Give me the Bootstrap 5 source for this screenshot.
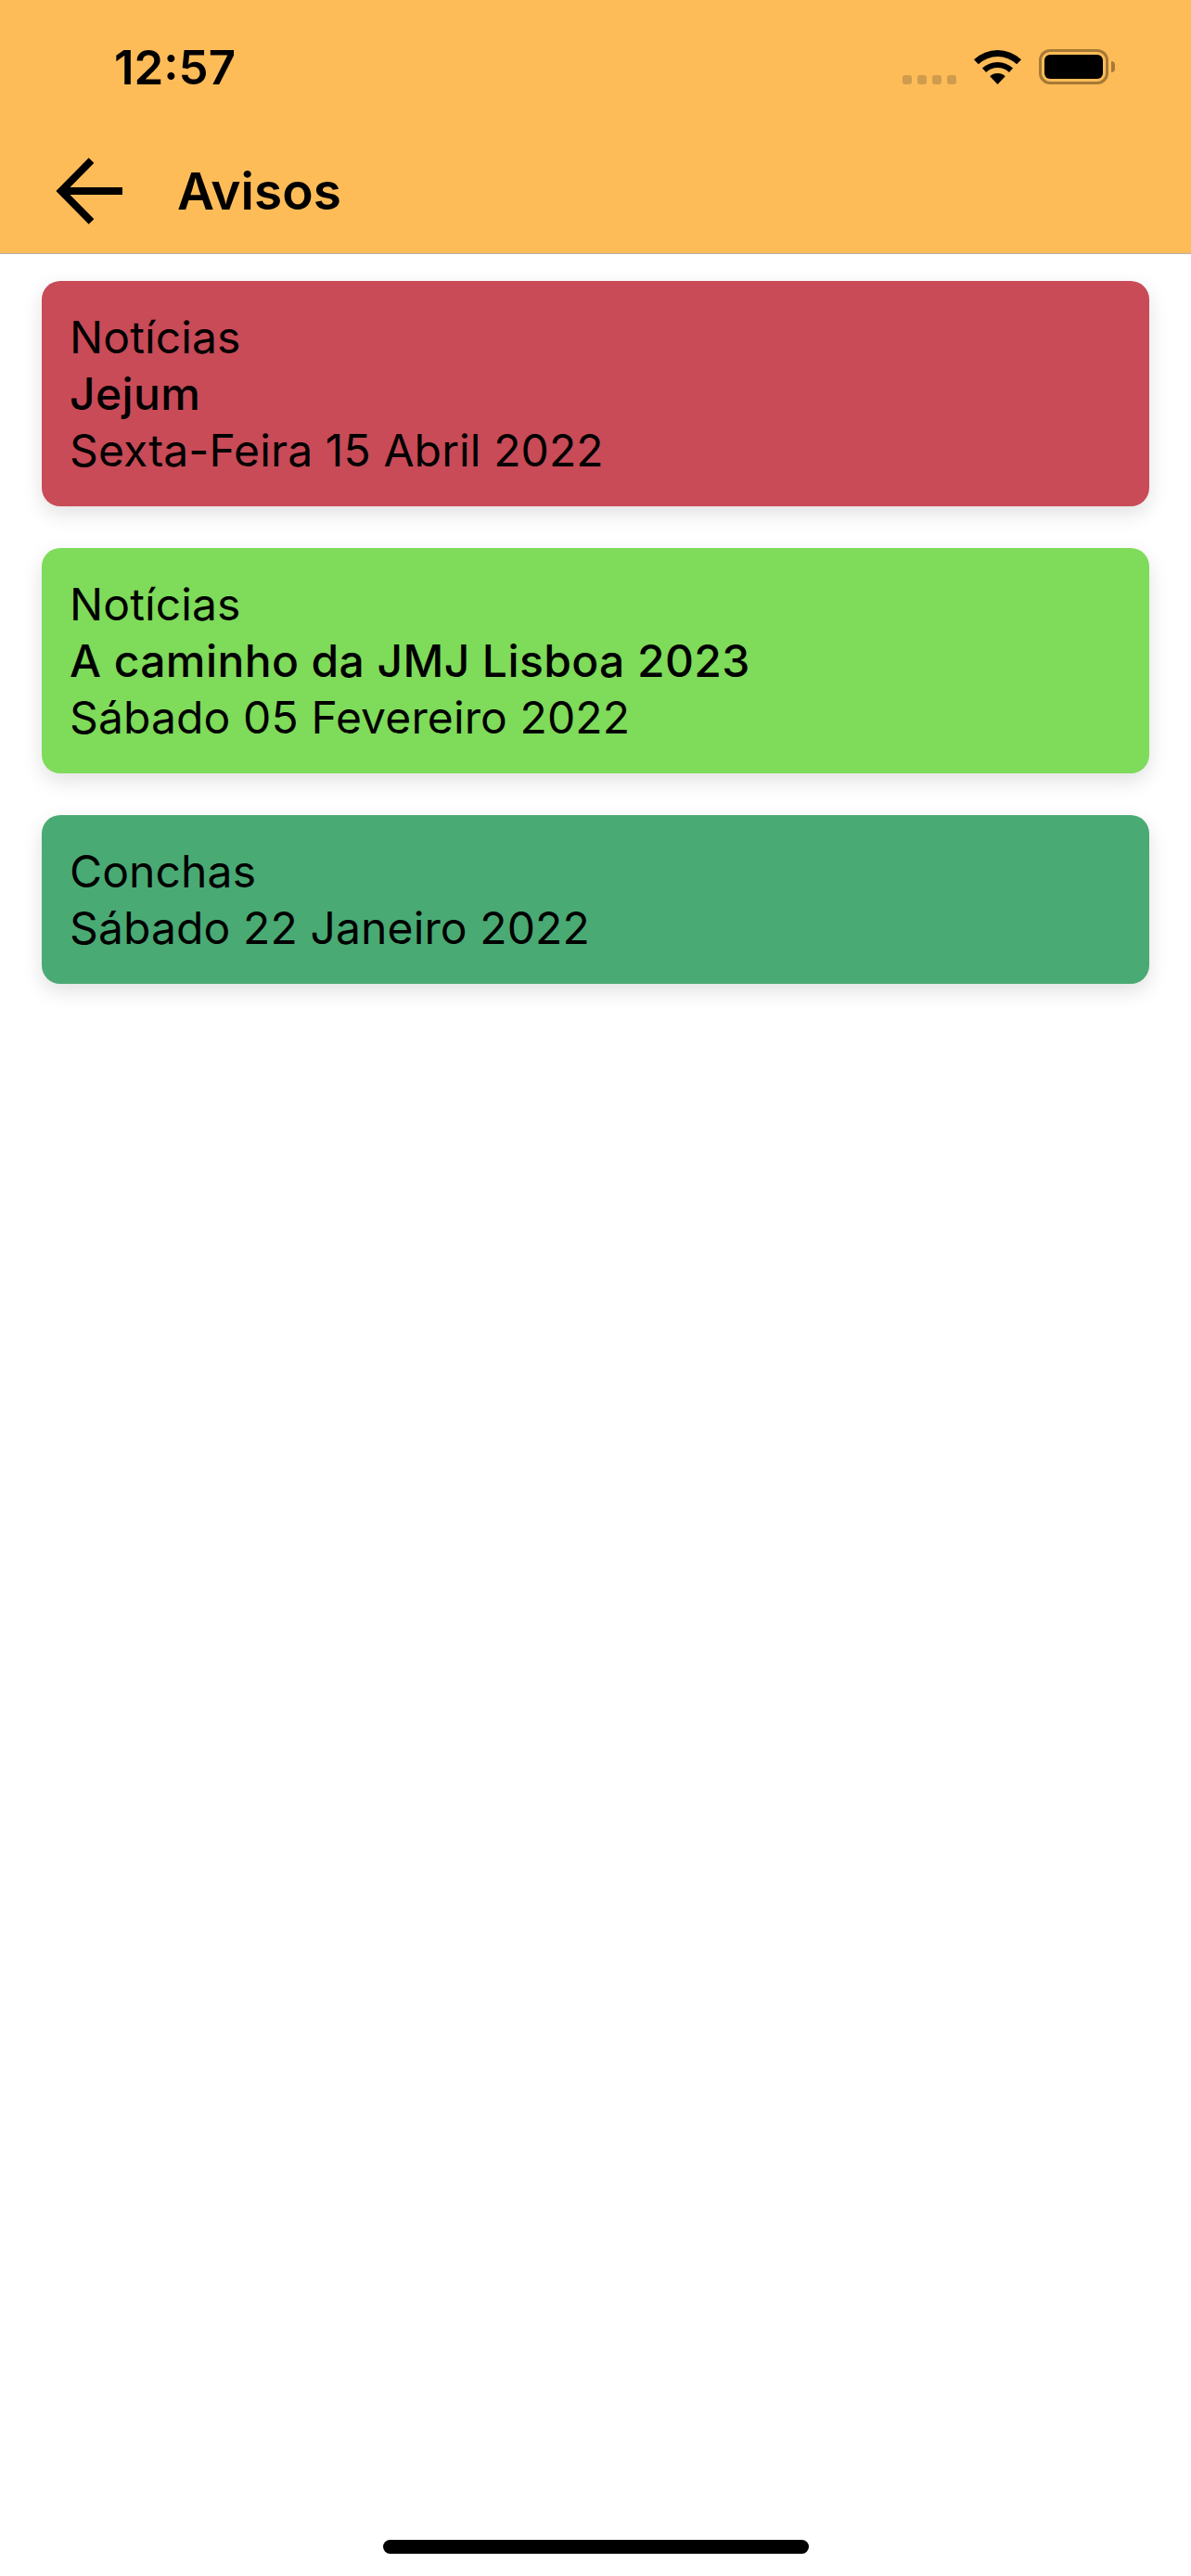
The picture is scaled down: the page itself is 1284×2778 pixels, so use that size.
<!DOCTYPE html>
<html lang="pt">
<head>
<meta charset="utf-8">
<title>Avisos</title>
<link href="https://cdn.jsdelivr.net/npm/bootstrap@5.3.0/dist/css/bootstrap.min.css" rel="stylesheet">
<style>
html, body { height: 100%; }
body { font-family: Inter, "Liberation Sans", sans-serif; color: #000; background: #fff; }
.app-shell { height: 2778px; }
.app-header { background: #febc59; height: 274px; border-bottom: 1px solid #b4b0a8; }
.status-row { height: 134px; }
.status-time { font-size: 51px; font-weight: 600; line-height: 1; margin-left: 123px; margin-top: 47px; }
.status-icons { margin-top: 53px; margin-right: 82px; }
.signal-dots { gap: 6px; margin-top: 28px; margin-right: 19px; }
.signal-dots span { width: 10px; height: 10px; border-radius: 3px; background: #cf9c4e; }
.wifi-icon { width: 51px; height: 37px; margin-top: 1px; margin-right: 19px; }
.batt-body { width: 75px; height: 38px; border: 3px solid #a67935; border-radius: 12px; padding: 3px; }
.batt-fill { background: #000; border-radius: 6px; }
.batt-nub { width: 4px; height: 12px; margin-left: 3px; margin-top: 13px; background: #a67935; border-radius: 0 6px 6px 0; }
.nav-row { height: 139px; }
.back-arrow { width: 72px; height: 72px; margin-left: 60px; margin-top: 36px; }
.nav-title { font-size: 55px; font-weight: 600; line-height: 1; margin-left: 59px; margin-top: 45px; }
.notice-list { padding: 29px 45px 0; gap: 45px; }
.notice-item { padding: 30px 30px; border-radius: 20px; border: 0; font-size: 48px; line-height: 61px; color: #000; letter-spacing: .12px; box-shadow: 0 8px 22px rgba(0,0,0,.12); }
.notice-title { font-weight: 500; letter-spacing: .4px; }
.tone-red { background: #c84b57; }
.tone-lime { background: #7fdb5a; }
.tone-teal { background: #4aaa74; }
.home-bar { width: 459px; height: 15px; border-radius: 8px; background: #000; margin-bottom: 24px; }
</style>
</head>
<body>
<div class="app-shell d-flex flex-column">
  <header class="app-header flex-shrink-0">
    <div class="status-row d-flex justify-content-between align-items-start">
      <div class="status-time">12:57</div>
      <div class="status-icons d-flex align-items-start">
        <div class="signal-dots d-flex"><span></span><span></span><span></span><span></span></div>
        <svg class="wifi-icon" viewBox="0 0 51 37" aria-hidden="true">
          <path d="M0 10.2A37 37 0 0 1 51 10.2L46.17 15.25A30 30 0 0 0 4.83 15.25Z"/>
          <path d="M8.96 19.6A24 24 0 0 1 42.04 19.6L37.9 23.95A18 18 0 0 0 13.1 23.95Z"/>
          <path d="M17.23 28.3A12 12 0 0 1 33.77 28.3L25.5 37Z"/>
        </svg>
        <div class="batt-body d-flex"><div class="batt-fill flex-grow-1"></div></div>
        <div class="batt-nub"></div>
      </div>
    </div>
    <div class="nav-row d-flex align-items-start">
      <svg class="back-arrow" viewBox="0 0 72 72" fill="none" stroke="#000" stroke-width="8" aria-hidden="true">
        <path d="M38.5 3 6 36 38.5 69M6 36H72"/>
      </svg>
      <div class="nav-title">Avisos</div>
    </div>
  </header>
  <main class="notice-list d-flex flex-column">
    <div class="card notice-item tone-red">
      <div>Notícias</div>
      <div class="notice-title">Jejum</div>
      <div>Sexta-Feira 15 Abril 2022</div>
    </div>
    <div class="card notice-item tone-lime">
      <div>Notícias</div>
      <div class="notice-title">A caminho da JMJ Lisboa 2023</div>
      <div>Sábado 05 Fevereiro 2022</div>
    </div>
    <div class="card notice-item tone-teal">
      <div>Conchas</div>
      <div>Sábado 22 Janeiro 2022</div>
    </div>
  </main>
  <div class="home-bar mt-auto mx-auto flex-shrink-0"></div>
</div>
<script src="https://cdn.jsdelivr.net/npm/bootstrap@5.3.0/dist/js/bootstrap.bundle.min.js"></script>
</body>
</html>
